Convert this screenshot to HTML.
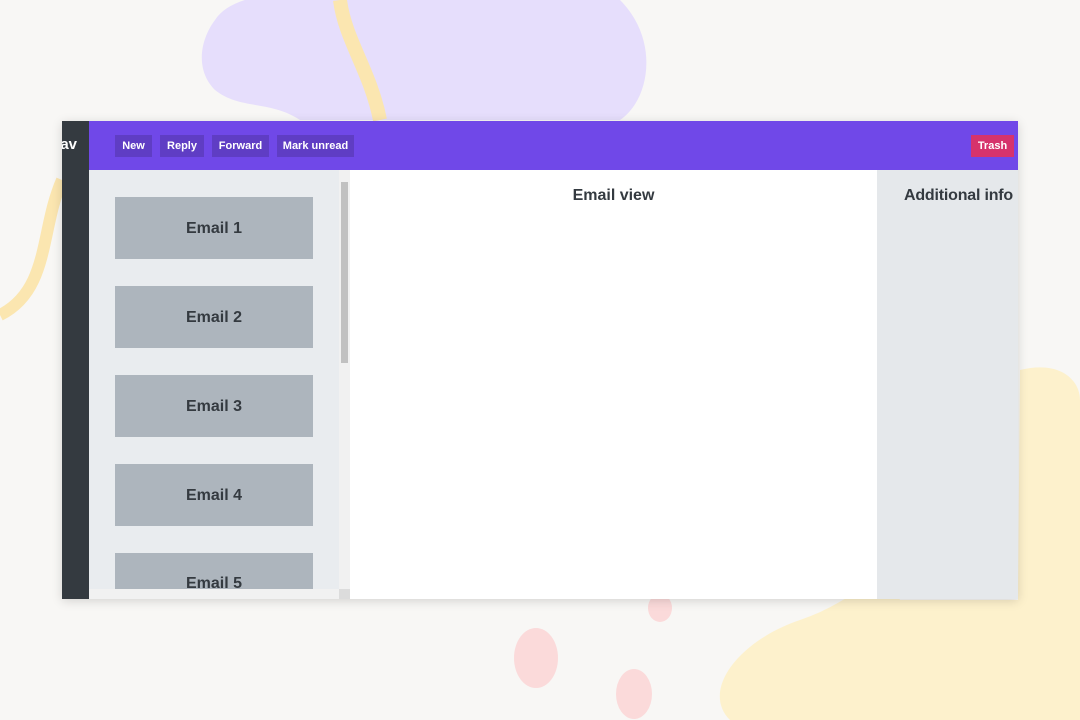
<!DOCTYPE html>
<html><head><style>
body{margin:0;width:1080px;height:720px;overflow:hidden;background:#f8f7f5;font-family:"Liberation Sans",Arial,sans-serif;position:relative}
.abs{position:absolute}
.btn{position:absolute;top:134px;height:22px;background:#5f3dc4;color:#fff;font-size:11px;font-weight:bold;line-height:22px;text-align:center}
.em{position:absolute;left:115px;width:198px;height:62px;background:#adb5bd;color:#343a40;font-weight:bold;font-size:16px;text-align:center;line-height:64px}
</style></head><body>
<svg class="abs" style="left:0;top:0" width="1080" height="720">
<path d="M215 20 C240 -20 360 -10 430 0 L620 0 C660 40 650 100 620 120 L300 120 C270 100 240 110 215 90 C195 70 200 40 215 20Z" fill="#e6defc"/>
<path d="M340 0 C345 40 370 70 380 120" stroke="#fbe6b0" stroke-width="14" fill="none"/>
<path d="M62 180 C40 230 50 290 0 315" stroke="#fbe6b0" stroke-width="12" fill="none"/>
<path d="M1020 370 C1060 360 1080 380 1080 400 L1080 720 L730 720 C700 690 740 640 800 620 C860 600 880 560 900 600 L1018 600Z" fill="#fdf1cc"/>
<ellipse cx="536" cy="658" rx="22" ry="30" fill="#fbdada"/>
<ellipse cx="634" cy="694" rx="18" ry="25" fill="#fbdada"/>
<ellipse cx="660" cy="608" rx="12" ry="14" fill="#fbdada"/>
</svg>
<div class="abs" style="left:62px;top:121px;width:956px;height:478px;box-shadow:0 2px 10px rgba(0,0,0,.15);background:#fff"></div>
<div class="abs" style="left:62px;top:121px;width:27px;height:478px;background:#343a40;overflow:hidden"><span style="position:absolute;right:12px;top:15px;color:#fff;font-weight:bold;font-size:15px">av</span></div>
<div class="abs" style="left:89px;top:121px;width:929px;height:49px;background:#7048e8"></div>
<div class="btn" style="left:115px;width:37px;top:135px">New</div>
<div class="btn" style="left:160px;width:44px;top:135px">Reply</div>
<div class="btn" style="left:212px;width:57px;top:135px">Forward</div>
<div class="btn" style="left:277px;width:77px;top:135px">Mark unread</div>
<div class="btn" style="left:971px;width:43px;top:135px;background:#d6336c">Trash</div>
<div class="abs" style="left:89px;top:170px;width:261px;height:429px;background:#e9ecef;overflow:hidden">
<div class="em" style="left:26px;top:27px">Email 1</div>
<div class="em" style="left:26px;top:116px">Email 2</div>
<div class="em" style="left:26px;top:205px">Email 3</div>
<div class="em" style="left:26px;top:294px">Email 4</div>
<div class="em" style="left:26px;top:383px;height:36px;overflow:hidden;line-height:62px">Email 5</div>
</div>
<div class="abs" style="left:339px;top:170px;width:11px;height:419px;background:#f1f1f1"></div>
<div class="abs" style="left:341px;top:182px;width:7px;height:181px;background:#c1c1c1"></div>
<div class="abs" style="left:89px;top:589px;width:250px;height:10px;background:#f1f1f1"></div>
<div class="abs" style="left:339px;top:589px;width:11px;height:10px;background:#dcdcdc"></div>
<div class="abs" style="left:350px;top:187px;width:527px;text-align:center;font-weight:bold;font-size:16px;color:#343a40">Email view</div>
<div class="abs" style="left:877px;top:170px;width:141px;height:429px;background:#e5e8eb"></div>
<div class="abs" style="left:904px;top:187px;font-weight:bold;font-size:16px;color:#343a40;white-space:nowrap;letter-spacing:-0.2px">Additional info</div>
</body></html>
